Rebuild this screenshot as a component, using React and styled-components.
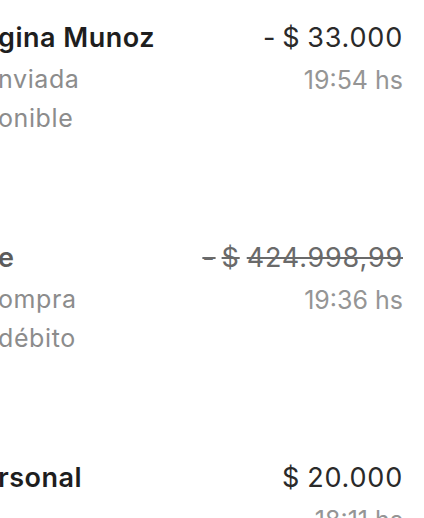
import React from "react";
import styled, { createGlobalStyle } from "styled-components";

const GlobalStyle = createGlobalStyle`
  html, body {
    margin: 0;
    padding: 0;
    background: #ffffff;
  }
  body {
    font-family: Inter, "Noto Sans", sans-serif;
    -webkit-font-smoothing: antialiased;
  }
`;

const Viewport = styled.div`
  width: 424px;
  height: 518px;
  overflow: hidden;
  background: #fff;
`;

const List = styled.ul`
  list-style: none;
  margin: 0;
  padding: 0;
`;

const Item = styled.li`
  height: 220px;
  display: flex;
  justify-content: space-between;
  align-items: flex-start;
  padding: 16px 21px 0 0;
  box-sizing: border-box;
`;

const Left = styled.div`
  display: flex;
  flex-direction: column;
  margin-left: -2px;
`;

const Right = styled.div`
  display: flex;
  flex-direction: column;
  align-items: flex-end;
`;

const Title = styled.span`
  font-size: 27px;
  font-weight: 600;
  letter-spacing: 0.5px;
  line-height: 44px;
  color: ${(p) => (p.$muted ? "#5c5c5c" : "#1e1e1e")};
`;

const Sub = styled.span`
  font-size: 25px;
  font-weight: 400;
  letter-spacing: 0.6px;
  line-height: 39px;
  color: #8c8c8c;
`;

const Amount = styled.span`
  font-size: 27px;
  font-weight: 400;
  letter-spacing: 0.8px;
  line-height: 44px;
  color: ${(p) => (p.$muted ? "#6a6a6a" : "#2a2a2a")};
  text-decoration: ${(p) => (p.$muted ? "line-through" : "none")};
  text-decoration-thickness: 2px;
`;

const Sign = styled.span`
  margin-right: 6px;
`;

const Currency = styled.span`
  margin-right: 7px;
`;

const Time = styled.span`
  font-size: 25px;
  line-height: 40px;
  color: #959595;
`;

const items = [
  {
    title: "gina Munoz",
    lines: ["nviada", "onible"],
    sign: "-",
    value: "33.000",
    time: "19:54 hs",
  },
  {
    title: "e",
    lines: ["ompra", "débito"],
    sign: "-",
    value: "424.998,99",
    time: "19:36 hs",
    muted: true,
  },
  {
    title: "rsonal",
    lines: [],
    sign: "",
    value: "20.000",
    time: "18:11 hs",
  },
];

export default function App() {
  return (
    <Viewport>
      <GlobalStyle />
      <List>
        {items.map((it) => (
          <Item key={it.time}>
            <Left>
              <Title $muted={it.muted}>{it.title}</Title>
              {it.lines.map((l) => (
                <Sub key={l}>{l}</Sub>
              ))}
            </Left>
            <Right>
              <Amount $muted={it.muted}>
                {it.sign && <Sign>{it.sign}</Sign>}
                <Currency>$</Currency>
                {it.value}
              </Amount>
              <Time>{it.time}</Time>
            </Right>
          </Item>
        ))}
      </List>
    </Viewport>
  );
}
